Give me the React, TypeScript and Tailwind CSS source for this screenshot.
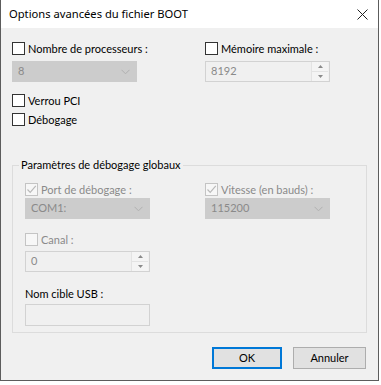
import React from 'react';

const font = { fontFamily: 'Lato, "Noto Sans", sans-serif' };

const Check = ({ checked = false, disabled = false }: { checked?: boolean; disabled?: boolean }) => (
  <span
    className={`w-[13px] h-[13px] shrink-0 border flex items-center justify-center ${
      disabled ? 'border-[#c4c4c4] bg-[#f7f7f7]' : 'border-[#333333] bg-white'
    }`}
  >
    {checked && (
      <svg width="11" height="11" viewBox="0 0 11 11">
        <path d="M1.5 5.5 L4.2 8.3 L9.8 1.8" fill="none" stroke={disabled ? '#b9b9b9' : '#333'} strokeWidth="1.2" />
      </svg>
    )}
  </span>
);

const CheckRow = ({ label, checked, disabled }: { label: string; checked?: boolean; disabled?: boolean }) => (
  <div className="flex items-center gap-[3px] h-[15px]">
    <Check checked={checked} disabled={disabled} />
    <span className={`text-[11px] leading-[15px] whitespace-nowrap ${disabled ? 'text-[#8a8a8a]' : 'text-black'}`}>{label}</span>
  </div>
);

const Select = ({ value }: { value: string }) => (
  <div className="w-[125px] h-[21px] bg-[#cccccc] border border-[#cccccc] flex items-center justify-between pl-[5px] pr-[6px]">
    <span className="text-[11px] text-[#8a8a8a]">{value}</span>
    <svg width="9" height="6" viewBox="0 0 9 6">
      <path d="M0.5 0.8 L4.5 4.8 L8.5 0.8" fill="none" stroke="#b0b0b0" strokeWidth="1" />
    </svg>
  </div>
);

const Spin = ({ value }: { value: string }) => (
  <div className="w-[125px] h-[21px] border border-[#d2d2d2] bg-[#f0f0f0] flex items-center">
    <span className="flex-1 pl-[5px] text-[11px] text-[#8a8a8a]">{value}</span>
    <div className="w-[17px] h-full flex flex-col border-l border-[#e3e3e3] mr-[1px]">
      <div className="flex-1 flex items-center justify-center border-b border-[#e3e3e3] bg-[#f4f4f4]">
        <svg width="5" height="3" viewBox="0 0 5 3"><path d="M0 3 L2.5 0 L5 3Z" fill="#8a8a8a" /></svg>
      </div>
      <div className="flex-1 flex items-center justify-center bg-[#f4f4f4]">
        <svg width="5" height="3" viewBox="0 0 5 3"><path d="M0 0 L2.5 3 L5 0Z" fill="#8a8a8a" /></svg>
      </div>
    </div>
  </div>
);

export default function App() {
  return (
    <div className="w-[381px] h-[385px] bg-white overflow-hidden" style={font}>
      <div className="w-[379px] h-[381px] border-l border-r border-b border-[#5c5c5c] bg-[#f0f0f0] flex flex-col">
        {/* Title bar */}
        <div className="h-[28px] bg-white flex items-center justify-between pl-[8px] pr-[10px]">
          <span className="text-[11.2px] text-black" style={{ fontFamily: '"Noto Sans", sans-serif' }}>
            Options avancées du fichier BOOT
          </span>
          <svg width="11" height="11" viewBox="0 0 11 11">
            <path d="M0.5 0.5 L10.5 10.5 M10.5 0.5 L0.5 10.5" stroke="#222" strokeWidth="1" />
          </svg>
        </div>

        {/* Body */}
        <div className="flex-1 pl-[11px] pr-[11px] flex flex-col">
          <div className="grid grid-cols-[193px_125px] mt-[13px]">
            <div className="flex flex-col">
              <CheckRow label="Nombre de processeurs :" />
              <div className="mt-[5px]"><Select value="8" /></div>
            </div>
            <div className="flex flex-col">
              <CheckRow label="Mémoire maximale :" />
              <div className="mt-[5px]"><Spin value="8192" /></div>
            </div>
          </div>

          <div className="mt-[11px]"><CheckRow label="Verrou PCI" /></div>
          <div className="mt-[4px]"><CheckRow label="Débogage" /></div>

          {/* Group box */}
          <div className="relative mt-[38px] w-[355px] h-[168px] border border-[#dcdcdc] pl-[12px]">
            <span className="absolute -top-[9px] left-[6px] px-[2px] bg-[#f0f0f0] text-[11px] leading-[16px] text-black">
              Paramètres de débogage globaux
            </span>
            <div className="grid grid-cols-[180px_125px] mt-[16px]">
              <div className="flex flex-col">
                <CheckRow label="Port de débogage :" checked disabled />
                <div className="mt-[1px]"><Select value="COM1:" /></div>
              </div>
              <div className="flex flex-col">
                <CheckRow label="Vitesse (en bauds) :" checked disabled />
                <div className="mt-[1px]"><Select value="115200" /></div>
              </div>
            </div>
            <div className="mt-[13px]"><CheckRow label="Canal :" disabled /></div>
            <div className="mt-[4px]"><Spin value="0" /></div>
            <div className="mt-[14px] h-[15px] text-[11px] leading-[15px] text-black">Nom cible USB :</div>
            <div className="mt-[3px] w-[125px] h-[22px] border border-[#d2d2d2] bg-[#f0f0f0]" />
          </div>

          {/* Buttons */}
          <div className="flex justify-end gap-[11px] mt-[14px] pr-[1px]">
            <button className="w-[70px] h-[22px] border-2 border-[#0078d7] bg-[#e1e1e1] text-[11px] text-black">OK</button>
            <button className="w-[73px] h-[22px] border border-[#adadad] bg-[#e1e1e1] text-[11px] text-black">Annuler</button>
          </div>
        </div>
      </div>
    </div>
  );
}
